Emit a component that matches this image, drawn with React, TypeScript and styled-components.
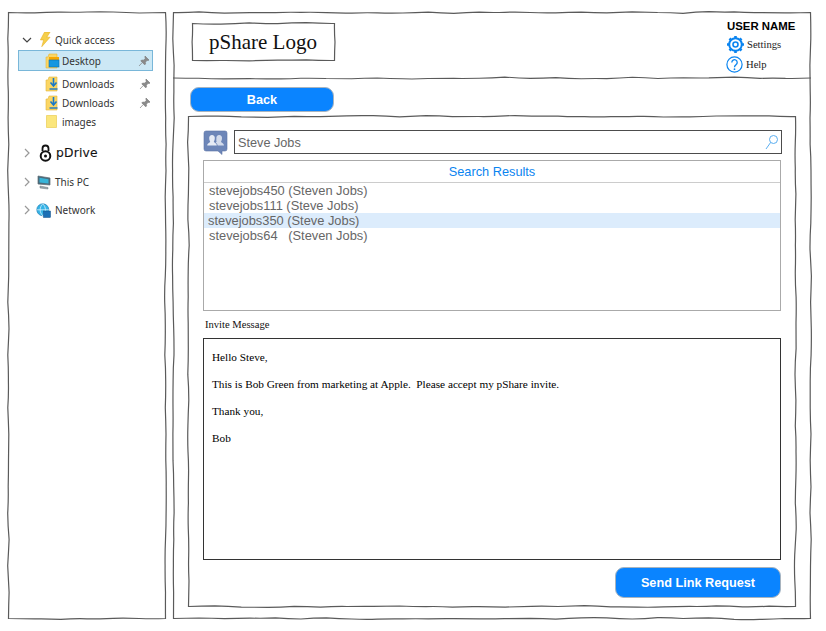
import React from 'react';
import styled, { createGlobalStyle } from 'styled-components';

const GlobalStyle = createGlobalStyle`
  html, body {
    margin: 0;
    padding: 0;
    background: #fff;
    font-family: "Liberation Sans", Arial, sans-serif;
  }
`;

// small seeded random, so the hand drawn lines stay the same on every render
const seeded = (seed: number) => {
  let s = seed;
  return () => {
    s = (s * 9301 + 49297) % 233280;
    return s / 233280;
  };
};

const wobbleEdge = (x1: number, y1: number, x2: number, y2: number, rnd: () => number) => {
  const len = Math.hypot(x2 - x1, y2 - y1);
  const steps = Math.max(2, Math.round(len / 26));
  const horizontal = y1 === y2;
  let d = '';
  let px = x1;
  let py = y1;
  for (let i = 1; i <= steps; i++) {
    const t = i / steps;
    const off = i === steps ? 0 : (rnd() - 0.5) * 1.8;
    const x = x1 + (x2 - x1) * t + (horizontal ? 0 : off);
    const y = y1 + (y2 - y1) * t + (horizontal ? off : 0);
    const cx = (px + x) / 2 + (horizontal ? 0 : (rnd() - 0.5) * 1.2);
    const cy = (py + y) / 2 + (horizontal ? (rnd() - 0.5) * 1.2 : 0);
    d += ` Q${cx.toFixed(1)} ${cy.toFixed(1)} ${x.toFixed(1)} ${y.toFixed(1)}`;
    px = x;
    py = y;
  }
  return d;
};

const SketchSvg = styled.svg`
  position: absolute;
  left: 0;
  top: 0;
  overflow: visible;
  pointer-events: none;
`;

const SketchBox = ({ w, h, seed }: { w: number; h: number; seed: number }) => {
  const rnd = seeded(seed);
  const d =
    `M0.5 0.5` +
    wobbleEdge(0.5, 0.5, w - 0.5, 0.5, rnd) +
    wobbleEdge(w - 0.5, 0.5, w - 0.5, h - 0.5, rnd) +
    wobbleEdge(w - 0.5, h - 0.5, 0.5, h - 0.5, rnd) +
    wobbleEdge(0.5, h - 0.5, 0.5, 0.5, rnd) +
    'Z';
  return (
    <SketchSvg width={w} height={h} viewBox={`0 0 ${w} ${h}`}>
      <path d={d} fill="none" stroke="#5a5a5a" strokeWidth="1.2" />
    </SketchSvg>
  );
};

const SketchRule = ({ w, y, seed }: { w: number; y: number; seed: number }) => {
  const rnd = seeded(seed);
  return (
    <SketchSvg width={w} height={y + 3} viewBox={`0 0 ${w} ${y + 3}`}>
      <path d={`M0 ${y}` + wobbleEdge(0, y, w, y, rnd)} fill="none" stroke="#5a5a5a" strokeWidth="1.1" />
    </SketchSvg>
  );
};

const Page = styled.div`
  display: flex;
  gap: 7px;
  width: 826px;
  height: 631px;
  box-sizing: border-box;
  padding: 12px 0 0 8px;
  overflow: hidden;
`;

const Sidebar = styled.aside`
  position: relative;
  width: 158px;
  height: 607px;
  box-sizing: border-box;
  padding: 18px 13px 0 10px;
  font-family: "Noto Sans", "Open Sans", sans-serif;
  font-size: 10px;
  color: #333;
`;

const NavRow = styled.div<{ $h?: number; $top?: number; $indent?: number; $selected?: boolean }>`
  display: flex;
  align-items: center;
  box-sizing: border-box;
  height: ${p => p.$h ?? 19}px;
  margin-top: ${p => p.$top ?? 0}px;
  padding-left: ${p => p.$indent ?? 0}px;
  padding-right: 2px;
  background: ${p => (p.$selected ? '#cce8f5' : 'transparent')};
  border: ${p => (p.$selected ? '1px solid #79b7d9' : 'none')};
`;

const Chevron = styled.svg`
  width: 10px;
  height: 10px;
  margin-left: 4px;
  flex: none;
`;

const NavIcon = styled.svg<{ $gap?: number; $left?: number }>`
  flex: none;
  margin-left: ${p => p.$left ?? 0}px;
  margin-right: ${p => p.$gap ?? 3}px;
`;

const NavLabel = styled.span`
  flex: 1;
  white-space: nowrap;
`;

const DriveLabel = styled.span`
  font-family: "DejaVu Sans", sans-serif;
  font-size: 12.3px;
  color: #111;
  letter-spacing: 0.2px;
  -webkit-text-stroke: 0.1px #111;
`;

const Main = styled.main`
  position: relative;
  width: 638px;
  height: 607px;
`;

const Header = styled.header`
  position: relative;
  display: flex;
  justify-content: space-between;
  box-sizing: border-box;
  height: 66px;
  padding: 11px 15px 0 19px;
`;

const Logo = styled.div`
  position: relative;
  display: flex;
  align-items: center;
  box-sizing: border-box;
  width: 143px;
  height: 38px;
  padding-left: 17px;
  font-family: "Liberation Serif", serif;
  font-size: 21px;
  color: #111;
`;

const UserBlock = styled.div`
  display: flex;
  flex-direction: column;
  width: 70px;
  margin-top: -4px;
`;

const UserName = styled.div`
  font-size: 11.4px;
  font-weight: 700;
  line-height: 15px;
  color: #000;
  white-space: nowrap;
  margin-left: 1px;
`;

const UserLink = styled.div<{ $gap: number }>`
  display: flex;
  align-items: center;
  height: 20px;
  gap: ${p => p.$gap}px;
  font-family: "Liberation Serif", serif;
  font-size: 10.6px;
  color: #222;
`;

const Body = styled.div`
  padding: 9px 0 0 15px;
`;

const PillButton = styled.button<{ $w: number; $h: number }>`
  display: block;
  box-sizing: border-box;
  width: ${p => p.$w}px;
  height: ${p => p.$h}px;
  padding: 0;
  border: 1px solid #a8b4bf;
  border-radius: 9px;
  background: #0a84ff;
  color: #fff;
  font-family: "Liberation Sans", Arial, sans-serif;
  font-size: 12.7px;
  font-weight: 700;
`;

const BackButton = styled(PillButton)`
  margin-left: 2px;
`;

const SendButton = styled(PillButton)`
  margin: 7px 0 0 auto;
`;

const Content = styled.section`
  position: relative;
  box-sizing: border-box;
  width: 608px;
  height: 491px;
  margin-top: 4px;
  padding: 14px 15px 0 15px;
`;

const SearchRow = styled.div`
  display: flex;
  align-items: flex-start;
  gap: 6px;
  width: 579px;
`;

const SearchField = styled.div`
  flex: 1;
  display: flex;
  align-items: center;
  justify-content: space-between;
  box-sizing: border-box;
  height: 24px;
  padding: 0 2px 0 3px;
  border: 1px solid #4c4c4c;
  font-size: 12.7px;
  color: #666;
`;

const SearchText = styled.span`
  padding-top: 2px;
`;

const Results = styled.div`
  box-sizing: border-box;
  width: 578px;
  height: 151px;
  margin-top: 5px;
  border: 1px solid #aaa;
`;

const ResultsTitle = styled.div`
  display: flex;
  align-items: center;
  justify-content: center;
  box-sizing: border-box;
  height: 22px;
  border-bottom: 1px solid #ccc;
  font-size: 12.75px;
  color: #0a84f0;
`;

const ResultRow = styled.div<{ $selected?: boolean }>`
  height: 15px;
  line-height: 15px;
  padding-left: ${p => (p.$selected ? 4 : 5)}px;
  background: ${p => (p.$selected ? '#dcecfc' : 'transparent')};
  font-size: 12.85px;
  color: #666;
  white-space: pre;
`;

const MessageLabel = styled.div`
  height: 27px;
  padding: 7px 0 0 2px;
  box-sizing: border-box;
  font-family: "Liberation Serif", serif;
  font-size: 10.6px;
  line-height: 13px;
  color: #111;
`;

const MessageBox = styled.div`
  box-sizing: border-box;
  width: 578px;
  height: 222px;
  padding: 12px 8px;
  border: 1px solid #333;
  font-family: "Liberation Serif", serif;
  font-size: 11.25px;
  color: #000;
`;

const MessageLine = styled.p`
  margin: 0 0 14px;
  line-height: 13px;
  white-space: pre;
`;

const ChevronDown = () => (
  <Chevron viewBox="0 0 10 10">
    <path d="M1 3l4 4 4-4" fill="none" stroke="#444" strokeWidth="1.2" />
  </Chevron>
);

const ChevronRight = () => (
  <Chevron viewBox="0 0 10 10">
    <path d="M3 1l4 4-4 4" fill="none" stroke="#999" strokeWidth="1.2" />
  </Chevron>
);

const Bolt = () => (
  <NavIcon width="12" height="15" viewBox="0 0 13 16" $left={7} $gap={4}>
    <path d="M6 0h6L8.500 5.500H12L3 15.800l2-7.300H1.500z" fill="#f5cf4b" stroke="#e7ae20" strokeWidth="0.6" />
  </NavIcon>
);

const Pin = () => (
  <svg width="12" height="12" viewBox="0 0 12 12">
    <path d="M7 1l4 4-1 .6-.8-.3L7.300 7.200l.3 1.700-.9.900L2.800 5.900l.9-.9 1.700.3 1.900-1.900-.3-.8zM4.200 7.600L1 11" fill="#8a8a8a" stroke="#808080" strokeWidth="0.7" />
  </svg>
);

const FolderBack = () => (
  <path d="M1 15V4h2l1-3h8v14z" fill="#fbd664" stroke="#e3b53a" strokeWidth="0.6" />
);

const DesktopFolder = () => (
  <NavIcon width="15" height="16" viewBox="0 0 15 16" $left={26} $gap={2}>
    <FolderBack />
    <rect x="4" y="4" width="10" height="3" fill="#f7a800" />
    <rect x="4" y="7" width="10" height="7" fill="#1597e0" stroke="#0b6fb0" strokeWidth="0.6" />
  </NavIcon>
);

const DownloadsFolder = () => (
  <NavIcon width="15" height="16" viewBox="0 0 15 16" $left={26} $gap={2}>
    <FolderBack />
    <path d="M8.500 2v7M5.500 6.500l3 3.500 3-3.500" fill="none" stroke="#1a78c8" strokeWidth="1.600" />
    <path d="M4.500 13h8" stroke="#1a78c8" strokeWidth="1.400" />
  </NavIcon>
);

const PlainFolder = () => (
  <NavIcon width="15" height="15" viewBox="0 0 15 15" $left={26} $gap={2}>
    <path d="M1.500 1.500h10v12h-10z" fill="#fbe67c" stroke="#ecd060" strokeWidth="0.8" />
  </NavIcon>
);

const LockMark = () => (
  <NavIcon width="13" height="18" viewBox="0 0 13 18" $left={7} $gap={4}>
    <path d="M3.500 7V4.500a3 3 0 0 1 6 0V7" fill="none" stroke="#111" strokeWidth="1.800" />
    <circle cx="6.500" cy="12" r="4.800" fill="none" stroke="#111" strokeWidth="2" />
    <circle cx="6.500" cy="12" r="1.500" fill="#111" />
  </NavIcon>
);

const PcIcon = () => (
  <NavIcon width="14" height="15" viewBox="0 0 14 15" $left={5} $gap={4}>
    <path d="M1 1l12 2v7L1 9z" fill="#4b6b7c" stroke="#5a6a74" strokeWidth="0.7" />
    <path d="M2.500 2.800l9 1.400v4.200l-9-1z" fill="#38b4d8" />
    <path d="M3 11l8 1.500v1.500l-8-1z" fill="#9aa5ab" stroke="#6f7a80" strokeWidth="0.5" />
  </NavIcon>
);

const GlobeIcon = () => (
  <NavIcon width="15" height="15" viewBox="0 0 15 15" $left={4} $gap={4}>
    <circle cx="6.800" cy="6.800" r="6" fill="#35b3e6" stroke="#1b7fb8" strokeWidth="0.7" />
    <path d="M.8 6.800h12M6.800.8c-3.500 3.500-3.500 8.500 0 12M6.800.8c3.500 3.500 3.500 8.500 0 12" fill="none" stroke="#e8f7ff" strokeWidth="0.7" />
    <rect x="7.500" y="8" width="7" height="6.500" fill="#1b6fb5" stroke="#124f85" strokeWidth="0.5" />
  </NavIcon>
);

const GearIcon = () => (
  <svg width="19" height="19" viewBox="0 0 19 19">
    <circle cx="9.500" cy="9.500" r="6.300" fill="none" stroke="#0a84f0" strokeWidth="2" />
    <circle cx="9.500" cy="9.500" r="2.500" fill="none" stroke="#0a84f0" strokeWidth="1.600" />
    <path
      d="M9.500 1v2.500M9.500 15.500V18M1 9.500h2.500M15.500 9.500H18M3.500 3.500l1.800 1.800M13.700 13.700l1.800 1.800M15.500 3.500l-1.800 1.800M5.300 13.700l-1.800 1.800"
      stroke="#0a84f0"
      strokeWidth="2.600"
    />
  </svg>
);

const HelpIcon = () => (
  <svg width="17" height="17" viewBox="0 0 17 17">
    <circle cx="8.500" cy="8.500" r="7.600" fill="none" stroke="#0a84f0" strokeWidth="1.200" />
    <path d="M5.800 6.400a2.700 2.700 0 1 1 4.300 2.200c-1 .7-1.600 1.200-1.600 2.600" fill="none" stroke="#0a84f0" strokeWidth="1.300" />
    <circle cx="8.500" cy="13.200" r="0.900" fill="#0a84f0" />
  </svg>
);

const PeopleIcon = () => (
  <svg width="25" height="25" viewBox="0 0 25 25">
    <path d="M3 1h19a2 2 0 0 1 2 2v16a2 2 0 0 1-2 2h-3v3.500L15 21H3a2 2 0 0 1-2-2V3a2 2 0 0 1 2-2z" fill="#6d86b8" stroke="#5c74a6" strokeWidth="0.6" />
    <path d="M9 5a2.800 2.800 0 0 1 2.800 3.200c0 1.800-.8 3-1 3.800 1.600.9 2.900 1.800 3 3.500H4.200c.1-1.700 1.500-2.600 3-3.500-.2-.8-1-2-1-3.800A2.800 2.800 0 0 1 9 5z" fill="#e6ebf5" />
    <path d="M16.200 5A2.800 2.800 0 0 1 19 8.200c0 1.800-.8 3-1 3.800 1.500.9 2.800 1.800 3 3.500h-6.300c-.3-1.500-1.200-2.400-2-3.100.4-.6.800-.4.900-.4-.2-.8-.4-2-.2-3.800A2.700 2.700 0 0 1 16.200 5z" fill="#d3dbeb" />
  </svg>
);

const GlassIcon = () => (
  <svg width="14" height="16" viewBox="0 0 14 16">
    <circle cx="8.500" cy="5.500" r="4" fill="none" stroke="#5aaef0" strokeWidth="1" />
    <path d="M5.600 8.500L1 15" stroke="#5aaef0" strokeWidth="1" />
  </svg>
);

const results = [
  { text: 'stevejobs450 (Steven Jobs)' },
  { text: 'stevejobs111 (Steve Jobs)' },
  { text: 'stevejobs350 (Steve Jobs)', selected: true },
  { text: 'stevejobs64   (Steven Jobs)' },
];

const message = [
  'Hello Steve,',
  'This is Bob Green from marketing at Apple.  Please accept my pShare invite.',
  'Thank you,',
  'Bob',
];

export default function App() {
  return (
    <>
      <GlobalStyle />
      <Page>
        <Sidebar>
          <SketchBox w={158} h={607} seed={11} />
          <NavRow>
            <ChevronDown />
            <Bolt />
            <NavLabel>Quick access</NavLabel>
          </NavRow>
          <NavRow $selected $h={21} $top={1}>
            <DesktopFolder />
            <NavLabel>Desktop</NavLabel>
            <Pin />
          </NavRow>
          <NavRow $top={3} $indent={1}>
            <DownloadsFolder />
            <NavLabel>Downloads</NavLabel>
            <Pin />
          </NavRow>
          <NavRow $indent={1}>
            <DownloadsFolder />
            <NavLabel>Downloads</NavLabel>
            <Pin />
          </NavRow>
          <NavRow $indent={1}>
            <PlainFolder />
            <NavLabel>images</NavLabel>
          </NavRow>
          <NavRow $h={24} $top={10}>
            <ChevronRight />
            <LockMark />
            <DriveLabel>pDrive</DriveLabel>
          </NavRow>
          <NavRow $h={20} $top={7}>
            <ChevronRight />
            <PcIcon />
            <NavLabel>This PC</NavLabel>
          </NavRow>
          <NavRow $h={20} $top={8}>
            <ChevronRight />
            <GlobeIcon />
            <NavLabel>Network</NavLabel>
          </NavRow>
        </Sidebar>

        <Main>
          <SketchBox w={638} h={607} seed={23} />
          <Header>
            <SketchRule w={638} y={66} seed={37} />
            <Logo>
              <SketchBox w={143} h={38} seed={41} />
              pShare Logo
            </Logo>
            <UserBlock>
              <UserName>USER NAME</UserName>
              <UserLink $gap={2}>
                <GearIcon />
                Settings
              </UserLink>
              <UserLink $gap={3}>
                <HelpIcon />
                Help
              </UserLink>
            </UserBlock>
          </Header>
          <Body>
            <BackButton $w={144} $h={25}>Back</BackButton>
            <Content>
              <SketchBox w={608} h={491} seed={53} />
              <SearchRow>
                <PeopleIcon />
                <SearchField>
                  <SearchText>Steve Jobs</SearchText>
                  <GlassIcon />
                </SearchField>
              </SearchRow>
              <Results>
                <ResultsTitle>Search Results</ResultsTitle>
                {results.map(r => (
                  <ResultRow key={r.text} $selected={r.selected}>{r.text}</ResultRow>
                ))}
              </Results>
              <MessageLabel>Invite Message</MessageLabel>
              <MessageBox>
                {message.map(line => (
                  <MessageLine key={line}>{line}</MessageLine>
                ))}
              </MessageBox>
              <SendButton $w={166} $h={31}>Send Link Request</SendButton>
            </Content>
          </Body>
        </Main>
      </Page>
    </>
  );
}
